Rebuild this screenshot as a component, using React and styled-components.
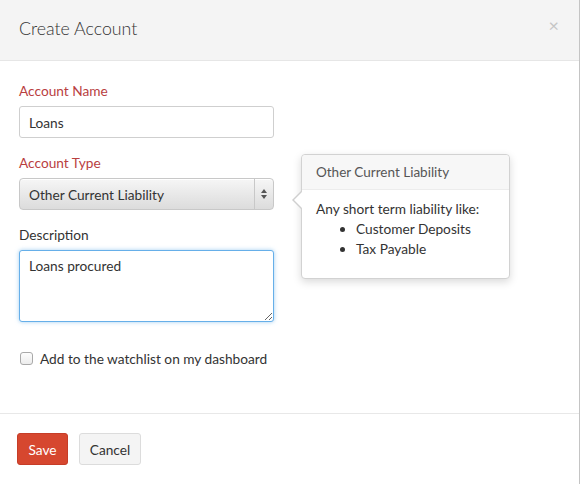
import React from "react";
import styled, { createGlobalStyle } from "styled-components";

const GlobalStyle = createGlobalStyle`
  html, body {
    margin: 0;
    padding: 0;
    background: #ffffff;
  }
  body {
    font-family: Lato, "Open Sans", Arial, sans-serif;
    color: #333;
  }
`;

function App() {
  return (
    <>
      <GlobalStyle />
      <Modal>
        <Header>
          <Title>Create Account</Title>
          <Close>×</Close>
        </Header>
        <Body>
          <Field>
            <Label required>Account Name</Label>
            <TextInput defaultValue="Loans" />
          </Field>
          <Field>
            <Label required>Account Type</Label>
            <SelectBox>
              <SelectValue>Other Current Liability</SelectValue>
              <SelectArrows>
                <svg width="8" height="12" viewBox="0 0 8 12">
                  <path d="M4 1 L7 5 H1 Z" fill="#555" />
                  <path d="M4 11 L7 7 H1 Z" fill="#555" />
                </svg>
              </SelectArrows>
            </SelectBox>
            <Popover>
              <PopoverTitle>Other Current Liability</PopoverTitle>
              <PopoverBody>
                Any short term liability like:
                <BulletList>
                  <li>Customer Deposits</li>
                  <li>Tax Payable</li>
                </BulletList>
              </PopoverBody>
            </Popover>
          </Field>
          <Field>
            <Label>Description</Label>
            <TextArea defaultValue="Loans procured" />
          </Field>
          <CheckRow>
            <CheckBox />
            <span>Add to the watchlist on my dashboard</span>
          </CheckRow>
        </Body>
        <Footer>
          <Button primary width={51}>Save</Button>
          <Button width={62}>Cancel</Button>
        </Footer>
      </Modal>
    </>
  );
}

export default App;

const Modal = styled.div`
  width: 579px;
  height: 484px;
  border-right: 1px solid #c4c4c4;
  display: flex;
  flex-direction: column;
  background: #fff;
`;

const Header = styled.div`
  height: 61px;
  background: #f4f4f4;
  border-bottom: 1px solid #e6e6e6;
  display: flex;
  align-items: center;
  justify-content: space-between;
  padding: 0 20px 0 19px;
  box-sizing: border-box;
`;

const Title = styled.h4`
  margin: 0 0 4px;
  font-size: 17.8px;
  font-weight: 300;
  color: #333;
`;

const Close = styled.span`
  font-size: 18px;
  color: #c6c6c6;
  margin-top: -10px;
  line-height: 1;
`;

const Body = styled.div`
  padding: 20px 19px 0;
  display: flex;
  flex-direction: column;
  flex: 1;
  border-bottom: 1px solid #e8e8e8;
`;

const Field = styled.div`
  position: relative;
  width: 255px;
  margin-bottom: 15px;
`;

const Label = styled.label`
  display: block;
  font-size: 13.7px;
  line-height: 18px;
  margin-bottom: 7px;
  margin-top: 1px;
  color: ${(props) => (props.required ? "#b9403f" : "#333")};
`;

const TextInput = styled.input`
  box-sizing: border-box;
  width: 255px;
  height: 32px;
  margin-top: -1px;
  border: 1px solid #cfcfcf;
  border-radius: 3px;
  padding: 0 9px;
  font-family: inherit;
  font-size: 13.7px;
  color: #333;
  outline: none;
`;

const SelectBox = styled.div`
  box-sizing: border-box;
  width: 255px;
  height: 32px;
  margin-top: -1px;
  border: 1px solid #c8c8c8;
  border-radius: 4px;
  background: linear-gradient(#f6f6f6, #e6e6e6 60%, #dcdcdc);
  box-shadow: inset 0 1px 0 #fff;
  display: flex;
  align-items: center;
`;

const SelectValue = styled.span`
  flex: 1;
  padding-left: 9px;
  font-size: 13.7px;
  color: #333;
`;

const SelectArrows = styled.span`
  width: 18px;
  height: 100%;
  border-left: 1px solid #c8c8c8;
  display: flex;
  align-items: center;
  justify-content: center;
`;

const Popover = styled.div`
  position: absolute;
  left: 282px;
  top: 1px;
  width: 209px;
  height: 125px;
  box-sizing: border-box;
  background: #fff;
  border: 1px solid #d2d2d2;
  border-radius: 4px;
  box-shadow: 0 3px 8px rgba(0, 0, 0, 0.15);
  z-index: 2;

  &::before,
  &::after {
    content: "";
    position: absolute;
    top: 36px;
    width: 0;
    height: 0;
    border-style: solid;
  }
  &::before {
    left: -10px;
    border-width: 9px 9px 9px 0;
    border-color: transparent #cfcfcf transparent transparent;
  }
  &::after {
    left: -8px;
    top: 37px;
    border-width: 8px 8px 8px 0;
    border-color: transparent #fff transparent transparent;
  }
`;

const PopoverTitle = styled.div`
  height: 35px;
  box-sizing: border-box;
  background: #f7f7f7;
  border-bottom: 1px solid #ececec;
  border-radius: 4px 4px 0 0;
  padding: 0 14px;
  display: flex;
  align-items: center;
  font-size: 13.5px;
  color: #555;
`;

const PopoverBody = styled.div`
  padding: 9px 14px;
  font-size: 13.7px;
  line-height: 20px;
  color: #333;
`;

const BulletList = styled.ul`
  margin: 0;
  padding-left: 40px;
  list-style: disc;
`;

const TextArea = styled.textarea`
  box-sizing: border-box;
  display: block;
  width: 255px;
  height: 72px;
  margin-top: -1px;
  border: 1px solid #66afe9;
  border-radius: 3px;
  box-shadow: 0 0 4px rgba(102, 175, 233, 0.6);
  padding: 6px 9px;
  font-family: inherit;
  font-size: 13.7px;
  color: #333;
  outline: none;
`;

const CheckRow = styled.label`
  display: flex;
  align-items: center;
  gap: 7px;
  margin-top: 13px;
  padding-left: 1px;
  font-size: 13.7px;
  color: #333;
`;

const CheckBox = styled.span`
  width: 11px;
  height: 11px;
  border: 1px solid #a9a9a9;
  border-radius: 3px;
  background: linear-gradient(#fdfdfd, #ececec);
`;

const Footer = styled.div`
  height: 70px;
  display: flex;
  align-items: center;
  gap: 11px;
  padding: 0 17px;
`;

const Button = styled.button`
  width: ${(props) => props.width}px;
  height: 32px;
  padding: 0;
  border-radius: 3px;
  font-family: inherit;
  font-size: 13.7px;
  border: 1px solid ${(props) => (props.primary ? "#c63d28" : "#dcdcdc")};
  background: ${(props) => (props.primary ? "#d6472f" : "#f4f4f4")};
  color: ${(props) => (props.primary ? "#fff" : "#333")};
`;
